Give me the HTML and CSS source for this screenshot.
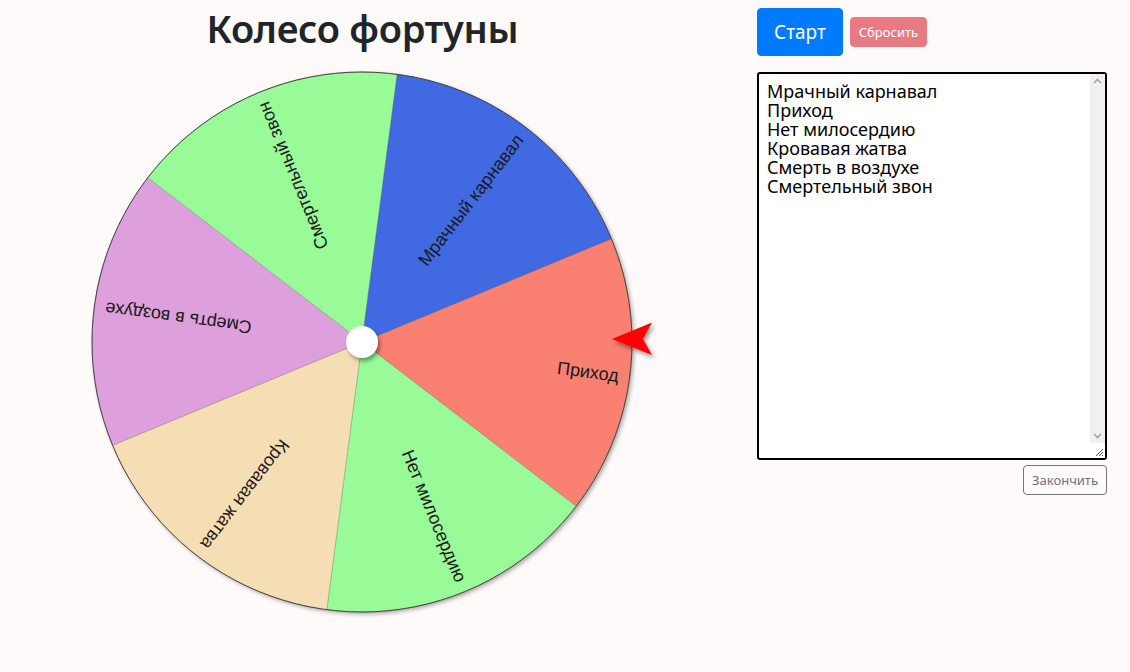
FILE: index.html
```html
<!DOCTYPE html>
<html lang="ru">
<head>
<meta charset="utf-8">
<title>Колесо фортуны</title>
<link rel="stylesheet" href="styles.css">
</head>
<body>
<div class="page">
  <div class="left">
    <h1 class="title">Колесо фортуны</h1>
    <svg class="wheel" width="725" height="570" viewBox="0 0 725 570">
      <defs>
        <filter id="sh" x="-10%" y="-10%" width="120%" height="120%">
          <feDropShadow dx="2" dy="2" stdDeviation="2" flood-color="#000" flood-opacity="0.35"/>
        </filter>
        <filter id="sh2" x="-50%" y="-50%" width="200%" height="200%">
          <feDropShadow dx="2" dy="3" stdDeviation="2" flood-color="#000" flood-opacity="0.4"/>
        </filter>
      </defs>
      <g transform="translate(362 280)">
        <circle r="270" fill="#fff" filter="url(#sh)"/>
        <g class="seg" transform="rotate(7.5)">
          <path d="M0 0 L233.83 -135 A270 270 0 0 1 233.83 135 Z" fill="#fa8072"/>
          <text x="259" y="0">Приход</text>
        </g>
        <g class="seg" transform="rotate(67.5)">
          <path d="M0 0 L233.83 -135 A270 270 0 0 1 233.83 135 Z" fill="#98fb98"/>
          <text x="259" y="0">Нет милосердию</text>
        </g>
        <g class="seg" transform="rotate(127.5)">
          <path d="M0 0 L233.83 -135 A270 270 0 0 1 233.83 135 Z" fill="#f5deb3"/>
          <text x="259" y="0">Кровавая жатва</text>
        </g>
        <g class="seg" transform="rotate(187.5)">
          <path d="M0 0 L233.83 -135 A270 270 0 0 1 233.83 135 Z" fill="#dda0dd"/>
          <text x="259" y="0">Смерть в воздухе</text>
        </g>
        <g class="seg" transform="rotate(247.5)">
          <path d="M0 0 L233.83 -135 A270 270 0 0 1 233.83 135 Z" fill="#98fb98"/>
          <text x="259" y="0">Смертельный звон</text>
        </g>
        <g class="seg" transform="rotate(307.5)">
          <path d="M0 0 L233.83 -135 A270 270 0 0 1 233.83 135 Z" fill="#4169e1"/>
          <text x="259" y="0">Мрачный карнавал</text>
        </g>
        <circle r="270" fill="none" stroke="#444" stroke-width="1"/>
        <circle r="16" fill="#fff" filter="url(#sh2)"/>
      </g>
      <polygon points="612,277 652,260.5 643,277 652,293" fill="#ff0000" filter="url(#sh2)"/>
    </svg>
  </div>
  <div class="right">
    <div class="buttons">
      <button class="btn btn-start">Старт</button>
      <button class="btn btn-reset">Сбросить</button>
    </div>
    <div class="list-wrap">
      <textarea class="list">Мрачный карнавал
Приход
Нет милосердию
Кровавая жатва
Смерть в воздухе
Смертельный звон</textarea>
      <div class="scrollbar">
        <svg class="arrow" width="15" height="15" viewBox="0 0 15 15"><path d="M4 9 L7.5 5.5 L11 9" fill="none" stroke="#a3a3a3" stroke-width="1.6"/></svg>
        <div class="track"></div>
        <svg class="arrow" width="15" height="15" viewBox="0 0 15 15"><path d="M4 6 L7.5 9.5 L11 6" fill="none" stroke="#a3a3a3" stroke-width="1.6"/></svg>
        <svg class="corner" width="15" height="15" viewBox="0 0 15 15"><path d="M13 6 L6 13 M13 9 L9 13 M13 12 L12 13" stroke="#555" stroke-width="1"/></svg>
      </div>
    </div>
    <div class="finish-row">
      <button class="btn btn-finish">Закончить</button>
    </div>
  </div>
</div>
</body>
</html>
```
FILE: styles.css
```css
html, body {
  margin: 0;
  padding: 0;
  background: #fffafa;
}
body {
  font-family: "Noto Sans", "Open Sans", sans-serif;
  color: #212529;
}
.page {
  display: flex;
  align-items: flex-start;
}
.left {
  width: 725px;
  display: flex;
  flex-direction: column;
  align-items: center;
  padding-top: 6px;
}
.title {
  margin: 0;
  font-size: 38px;
  line-height: 44px;
  font-weight: 600;
  color: #212529;
  letter-spacing: -0.3px;
}
.wheel {
  display: block;
  margin-top: 12px;
}
.seg path {
  stroke: rgba(0, 0, 0, 0.25);
  stroke-width: 0.6;
}
.seg text {
  font-family: "Liberation Sans", Arial, sans-serif;
  font-size: 18px;
  fill: #1a1a1a;
  text-anchor: end;
  dominant-baseline: central;
}
.right {
  width: 350px;
  margin-left: 32px;
  padding-top: 8px;
  display: flex;
  flex-direction: column;
}
.buttons {
  display: flex;
  align-items: center;
  gap: 7px;
}
.btn {
  font-family: "Noto Sans", "Open Sans", sans-serif;
  border-radius: 4px;
  cursor: pointer;
}
.btn-start {
  background: #007bff;
  border: 1px solid #007bff;
  color: #fff;
  font-size: 19px;
  height: 48px;
  padding: 0 16px;
}
.btn-reset {
  background: #e87a84;
  border: 1px solid #e87a84;
  color: #fff;
  font-size: 13px;
  height: 30px;
  padding: 0 8px;
}
.list-wrap {
  position: relative;
  margin-top: 16px;
  width: 350px;
  height: 388px;
}
.list {
  display: block;
  box-sizing: border-box;
  width: 350px;
  height: 388px;
  border: 2px solid #000;
  border-radius: 3px;
  padding: 8px 24px 8px 8px;
  font-family: "Noto Sans", "Open Sans", sans-serif;
  font-size: 18px;
  line-height: 19px;
  color: #000;
  background: #fff;
  overflow: hidden;
  resize: none;
  outline: none;
}
.scrollbar {
  position: absolute;
  top: 2px;
  right: 2px;
  bottom: 2px;
  width: 15px;
  display: flex;
  flex-direction: column;
  background: #f0f0f0;
}
.arrow {
  display: block;
  flex: none;
}
.track {
  flex: 1;
}
.corner {
  display: block;
  flex: none;
  background: #fff;
}
.finish-row {
  display: flex;
  justify-content: flex-end;
  margin-top: 5px;
}
.btn-finish {
  background: transparent;
  border: 1px solid #6c757d;
  color: #6c757d;
  font-size: 13px;
  height: 30px;
  padding: 0 8px;
}
```
